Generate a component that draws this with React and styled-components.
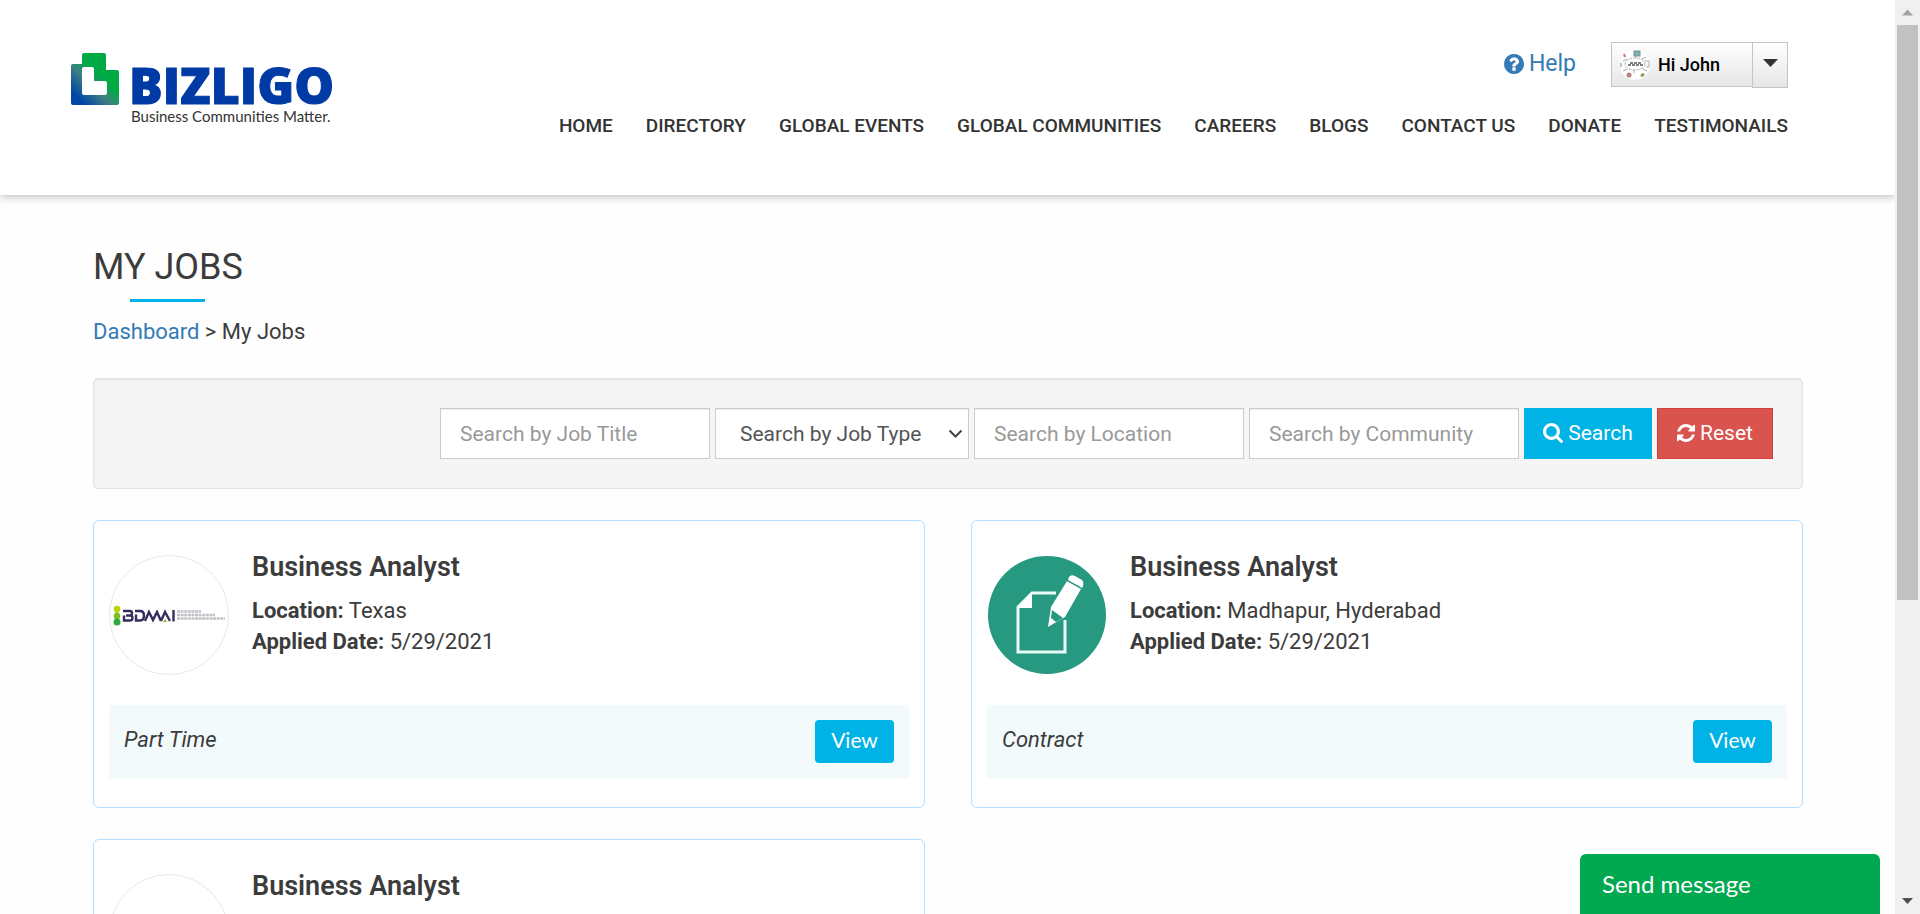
import React from "react";
import styled, { createGlobalStyle } from "styled-components";

const GlobalStyle = createGlobalStyle`
  *, *::before, *::after { box-sizing: border-box; }
  body { margin: 0; background: #fefefe; color: #3c3c3c; font: 22px/31px Roboto, sans-serif; }
  a { text-decoration: none; color: #337ab7; }
  button, input, select { font-family: inherit; }
`;

const Screen = styled.div`display: flex; height: 100vh;`;
const Page = styled.div`
  flex: 1; min-width: 0; overflow-y: auto; scrollbar-width: none;
  &::-webkit-scrollbar { display: none; }
`;

/* Window scrollbar */
const Scrollbar = styled.div`
  flex: none; width: 25px; background: #f0f0f0; padding: 0 2px;
  display: flex; flex-direction: column;
`;
const ScrollArrow = styled.svg`display: block; width: 21px; height: 25px; flex: none;`;
const ScrollTrack = styled.div`flex: 1;`;
const ScrollThumb = styled.div`height: 66.5%; background: #c1c1c1;`;

/* Header */
const Header = styled.header`
  display: flex; justify-content: space-between; align-items: flex-start;
  height: 195px; padding: 42px 107px 0 70px; background: #fff;
  box-shadow: 0 2px 8px rgba(0, 0, 0, 0.25); position: relative;
`;
const LogoLink = styled.a`display: block; padding-top: 6px; svg { display: block; }`;
const HeaderRight = styled.div`display: flex; flex-direction: column; align-items: flex-end; gap: 24px;`;
const Account = styled.div`display: flex; align-items: flex-start; gap: 35px;`;
const HelpLink = styled.a`
  display: flex; align-items: center; gap: 5px; font-size: 23px; line-height: 44px;
`;
const SplitButton = styled.div`display: flex; align-items: flex-start;`;
const UserButton = styled.button`
  display: flex; align-items: center; gap: 8px; width: 141px; height: 45px; padding: 0 8px;
  border: 1px solid #c5c5c5; border-right: 0; background: linear-gradient(#fff, #e6e6e6);
  font-size: 18px; font-weight: 500; color: #000; white-space: nowrap;
`;
const CaretButton = styled.button`
  display: grid; place-items: center; width: 36px; height: 46px; padding: 0 0 4px;
  border: 1px solid #c5c5c5; background: linear-gradient(#fff, #e6e6e6);
`;
const Nav = styled.nav`
  display: flex; gap: 33px; font-size: 19px; line-height: 28px; font-weight: 500; white-space: nowrap;
  a { color: #333; }
`;

/* Main area */
const Main = styled.main`padding: 52px 92px 40px 93px;`;
const Title = styled.h1`
  display: flex; flex-direction: column; align-items: center; width: fit-content;
  margin: 0; font-size: 36px; line-height: 40px; font-weight: 400;
  &::after { content: ""; width: 75px; height: 3px; margin-top: 12px; background: #00b3e6; }
`;
const Breadcrumb = styled.div`margin-top: 14px; line-height: 32px;`;
const SearchBar = styled.form`
  display: flex; justify-content: flex-end; align-items: center; gap: 5px;
  margin: 30px 0 31px; padding: 29px;
  background: #f5f5f5; border: 1px solid #e3e3e3; border-radius: 5px;
  box-shadow: inset 0 1px 2px rgba(0, 0, 0, 0.08);
`;
const Field = styled.input`
  width: 270px; height: 51px; padding: 0 19px; border: 1px solid #ccc; border-radius: 0;
  background: #fff; font-size: 21px; color: #555; box-shadow: inset 0 1px 1px rgba(0, 0, 0, 0.075);
  &::placeholder { color: #999; opacity: 1; }
`;
const SelectWrap = styled.div`
  position: relative; width: 254px;
  svg { position: absolute; right: 6px; top: 21px; pointer-events: none; }
`;
const SelectBox = styled.select`
  appearance: none; display: block;
  width: 100%; height: 51px; padding: 0 24px; border: 1px solid #ccc; border-radius: 0;
  background: #fff; font-size: 21px; color: #555; box-shadow: inset 0 1px 1px rgba(0, 0, 0, 0.075);
`;
const ActionButton = styled.button`
  display: flex; align-items: center; justify-content: center; gap: 5px;
  width: ${(p) => p.$width}px; height: 51px; padding: 0 0 2px; color: #fff; font-size: 21px;
  background: ${(p) => p.$bg}; border: 1px solid ${(p) => p.$border};
`;

/* Job cards */
const JobGrid = styled.div`display: grid; grid-template-columns: 1fr 1fr; gap: 31px 46px;`;
const Card = styled.article`
  height: 288px; padding: 34px 15px 0; background: #fff;
  border: 1px solid #b3dcff; border-radius: 6px;
`;
const CardTop = styled.div`display: flex; gap: 23px; height: 150px;`;
const Avatar = styled.svg`display: block; flex: none; width: 120px; height: 120px;`;
const JobTitle = styled.h2`margin: -4px 0 11px; font-size: 27px; line-height: 33px; font-weight: 600;`;
const JobInfo = styled.p`margin: 0; strong { font-weight: 700; } `;
const CardFooter = styled.div`
  display: flex; justify-content: space-between; align-items: center;
  height: 73px; padding: 0 15px; background: #f2fafc;
`;
const JobType = styled.em`padding-bottom: 5px;`;
const ViewButton = styled.button`
  width: 79px; height: 43px; padding: 0 0 5px; border: 0; border-radius: 4px;
  background: #00b3e6; color: #fff; font: 21px Lato, sans-serif;
`;

const ChatButton = styled.button`
  position: fixed; right: 40px; bottom: 0; width: 300px; height: 60px; padding: 0 22px 1px;
  border: 0; border-radius: 6px 6px 0 0; background: #00a850; color: #fff;
  font: 24px Lato, sans-serif; text-align: left;
`;

const paths = {
  help: "M1024 1376v-192q0-14-9-23t-23-9h-192q-14 0-23 9t-9 23v192q0 14 9 23t23 9h192q14 0 23-9t9-23zm256-672q0-88-55.5-163t-138.5-116-170-41q-243 0-371 213-15 24 8 42l132 100q7 6 19 6 16 0 25-12 53-68 86-92 34-24 86-24 48 0 85.5 26t37.5 59q0 38-20 61t-68 45q-63 28-115.5 86.5t-52.5 125.5v36q0 14 9 23t23 9h192q14 0 23-9t9-23q0-19 21.5-49.5t54.5-49.5q32-18 49-28.5t46-35 44.5-48 28-60.5 12.5-81zm384 192q0 209-103 385.5t-279.5 279.5-385.5 103-385.5-103-279.5-279.5-103-385.5 103-385.5 279.5-279.5 385.5-103 385.5 103 279.5 279.5 103 385.5z",
  search: "M1216 832q0-185-131.5-316.5t-316.5-131.5-316.5 131.5-131.5 316.5 131.5 316.5 316.5 131.5 316.5-131.5 131.5-316.5zm512 832q0 52-38 90t-90 38q-54 0-90-38l-343-342q-179 124-399 124-143 0-273.5-55.5t-225-150-150-225-55.5-273.5 55.5-273.5 150-225 225-150 273.5-55.5 273.5 55.5 225 150 150 225 55.5 273.5q0 220-124 399l343 343q37 37 37 90z",
  refresh: "M1639 1056q0 5-1 7-64 268-268 434.5t-478 166.5q-146 0-282.5-55t-243.5-157l-129 129q-19 19-45 19t-45-19-19-45v-448q0-26 19-45t45-19h448q26 0 45 19t19 45-19 45l-137 137q71 66 161 102t187 36q134 0 250-65t186-179q11-17 53-117 8-23 30-23h192q13 0 22.5 9.5t9.5 22.5zm25-800v448q0 26-19 45t-45 19h-448q-26 0-45-19t-19-45 19-45l138-138q-148-137-349-137-134 0-250 65t-186 179q-11 17-53 117-8 23-30 23h-199q-13 0-22.5-9.5t-9.5-22.5v-7q65-268 270-434.5t480-166.5q146 0 284 55.5t245 156.5l130-129q19-19 45-19t45 19 19 45z",
};
const viewBoxes = { help: "128 128 1536 1536", search: "64 128 1664 1664", refresh: "128 128 1536 1536" };

function Icon({ name, size }) {
  return (
    <svg width={size} height={size} viewBox={viewBoxes[name]} fill="currentColor" aria-hidden="true">
      <path d={paths[name]} />
    </svg>
  );
}

function Logo() {
  return (
    <svg width="280" height="80" viewBox="0 0 280 80" role="img" aria-label="Bizligo">
      <defs>
        <linearGradient id="mark" x1="0.1" y1="0.95" x2="0.8" y2="0.2">
          <stop offset="0.1" stopColor="#0047a5" />
          <stop offset="0.45" stopColor="#3f7f84" />
          <stop offset="0.7" stopColor="#00ab45" />
        </linearGradient>
      </defs>
      <path d="M14 5h20a2 2 0 0 1 2 2v15h11a2 2 0 0 1 2 2v31a2 2 0 0 1-2 2H3a2 2 0 0 1-2-2V18a2 2 0 0 1 2-2h9V7a2 2 0 0 1 2-2z" fill="url(#mark)" />
      <path d="M14 19h8a2 2 0 0 1 2 2v12h11a2 2 0 0 1 2 2v10a2 2 0 0 1-2 2H14a2 2 0 0 1-2-2V21a2 2 0 0 1 2-2z" fill="#fff" />
      <text x="59" y="56" fontFamily="Open Sans, sans-serif" fontSize="50" fontWeight="800" fill="#003aa5" stroke="#003aa5" strokeWidth="1">BIZLIGO</text>
      <text x="61" y="74" fontFamily="Lato, sans-serif" fontSize="15" fill="#333">Business Communities Matter.</text>
    </svg>
  );
}

function UserPhoto() {
  return (
    <svg width="30" height="30" viewBox="0 0 30 30" aria-hidden="true">
      <circle cx="15" cy="15" r="15" fill="#fff" />
      <rect x="14" y="1" width="6" height="5" fill="#7db3b8" stroke="#7b8f94" />
      <path d="M4 4l1 3" stroke="#d0736b" strokeWidth="2" />
      <path d="M1 13v4" stroke="#5d9aa5" strokeWidth="1" />
      <ellipse cx="15" cy="14" rx="10" ry="6" fill="none" stroke="#b3b3b3" strokeDasharray="3 1" />
      <path d="M10 13h11M8 15h15" stroke="#555" strokeWidth="1.500" strokeDasharray="3 1" />
      <path d="M7 9L3 11M22 9l4-2M7 19l-4 2M23 19l4 2M16 8V6M14 20v3M25 11h4v6h-3" stroke="#aaa" fill="none" />
      <circle cx="9" cy="25" r="2.500" fill="#b48383" />
      <path d="M20 26l2-3 3 1-2 3z" fill="#879c53" />
    </svg>
  );
}

function BdmaiLogo() {
  return (
    <Avatar viewBox="0 0 120 120" role="img" aria-label="BDMAI">
      <circle cx="60" cy="60" r="59.5" fill="#fff" stroke="#e8e8e8" />
      <path d="M8 52v18" stroke="#9cc83a" strokeWidth="3" />
      <circle cx="8" cy="54" r="3.3" fill="#bfd000" />
      <circle cx="8" cy="61" r="3.3" fill="#7fbf25" />
      <circle cx="8" cy="67" r="3.5" fill="#2eab3d" />
      <g fill="none" stroke="#362d5c" strokeWidth="2.4">
        <path d="M14 56h7q2 0 2 2.200t-2 2.300h-4M21 60.500q2.500 0 2.500 2.500t-2.500 2.500h-6v-5" />
        <path d="M26 56h5q4 0 4 4.700t-4 4.800h-4v-6" />
        <path d="M36 66l4-9 4 8 4-8 4 9M52 66l4-9 5 9M64.500 55v11.500" />
      </g>
      <path d="M54 67l2-3 2 3z" fill="#7fbf25" />
      <g stroke="#c3c1c8" strokeWidth="2.500" strokeDasharray="3 0.6">
        <path d="M68 56.500h24M68 60h38M68 63.500h48" />
      </g>
    </Avatar>
  );
}

function DocumentLogo() {
  return (
    <Avatar viewBox="0 0 120 120" role="img" aria-label="Document and pencil">
      <circle cx="60" cy="60" r="59" fill="#279980" />
      <path d="M69 38H45L31 52v45h47V65" fill="none" stroke="#e9fbf6" strokeWidth="3" />
      <path d="M45 37v16H31z" fill="#fff" />
      <path d="M80 26L94 34 78 62 66 69 61 72 64 52z" fill="#fff" />
      <path d="M65 55l11 8-7 4-5-4z" fill="#279980" />
      <path d="M82 22q2-3 6-1l7 4q2 2 1 6l-1 2-14-8z" fill="#fff" />
      <path d="M79 25l15 8" stroke="#279980" />
    </Avatar>
  );
}

const navItems = ["HOME", "DIRECTORY", "GLOBAL EVENTS", "GLOBAL COMMUNITIES", "CAREERS", "BLOGS", "CONTACT US", "DONATE", "TESTIMONAILS"];

const jobs = [
  { id: 1, logo: BdmaiLogo, title: "Business Analyst", location: "Texas", date: "5/29/2021", type: "Part Time" },
  { id: 2, logo: DocumentLogo, title: "Business Analyst", location: "Madhapur, Hyderabad", date: "5/29/2021", type: "Contract" },
  { id: 3, logo: BdmaiLogo, title: "Business Analyst", location: "Texas", date: "5/29/2021", type: "Part Time" },
];

function JobCard({ job }) {
  const CompanyLogo = job.logo;
  return (
    <Card>
      <CardTop>
        <CompanyLogo />
        <div>
          <JobTitle>{job.title}</JobTitle>
          <JobInfo><strong>Location:</strong> {job.location}</JobInfo>
          <JobInfo><strong>Applied Date:</strong> {job.date}</JobInfo>
        </div>
      </CardTop>
      <CardFooter>
        <JobType>{job.type}</JobType>
        <ViewButton type="button">View</ViewButton>
      </CardFooter>
    </Card>
  );
}

export default function App() {
  return (
    <Screen>
      <GlobalStyle />
      <Page>
        <Header>
          <LogoLink href="#home"><Logo /></LogoLink>
          <HeaderRight>
            <Account>
              <HelpLink href="#help"><Icon name="help" size={20} />Help</HelpLink>
              <SplitButton>
                <UserButton type="button"><UserPhoto />Hi John</UserButton>
                <CaretButton type="button" aria-label="Account menu">
                  <svg width="15" height="8" viewBox="0 0 15 8"><path d="M0 0h15L7.500 8z" fill="#333" /></svg>
                </CaretButton>
              </SplitButton>
            </Account>
            <Nav>{navItems.map((item) => <a key={item} href="#nav">{item}</a>)}</Nav>
          </HeaderRight>
        </Header>
        <Main>
          <Title>MY JOBS</Title>
          <Breadcrumb><a href="#dashboard">Dashboard</a> &gt; My Jobs</Breadcrumb>
          <SearchBar onSubmit={(e) => e.preventDefault()}>
            <Field type="text" aria-label="Job title" placeholder="Search by Job Title" />
            <SelectWrap>
              <SelectBox aria-label="Job type" defaultValue="">
                <option value="">Search by Job Type</option>
                <option>Part Time</option>
                <option>Contract</option>
              </SelectBox>
              <svg width="15" height="10" viewBox="0 0 15 10" aria-hidden="true">
                <path d="M1.500 1.500l6 6 6-6" fill="none" stroke="#444" strokeWidth="2" />
              </svg>
            </SelectWrap>
            <Field type="text" aria-label="Location" placeholder="Search by Location" />
            <Field type="text" aria-label="Community" placeholder="Search by Community" />
            <ActionButton type="submit" $width={128} $bg="#00b3e6" $border="#00b3e6"><Icon name="search" size={20} />Search</ActionButton>
            <ActionButton type="reset" $width={116} $bg="#d9534f" $border="#d43f3a"><Icon name="refresh" size={18} />Reset</ActionButton>
          </SearchBar>
          <JobGrid>{jobs.map((job) => <JobCard key={job.id} job={job} />)}</JobGrid>
        </Main>
      </Page>
      <Scrollbar aria-hidden="true">
        <ScrollArrow viewBox="0 0 21 25"><path d="M5 15.500h11l-5.500-6z" fill="#a3a3a3" /></ScrollArrow>
        <ScrollTrack><ScrollThumb /></ScrollTrack>
        <ScrollArrow viewBox="0 0 21 25"><path d="M5 9h11l-5.500 6z" fill="#505050" /></ScrollArrow>
      </Scrollbar>
      <ChatButton type="button">Send message</ChatButton>
    </Screen>
  );
}
